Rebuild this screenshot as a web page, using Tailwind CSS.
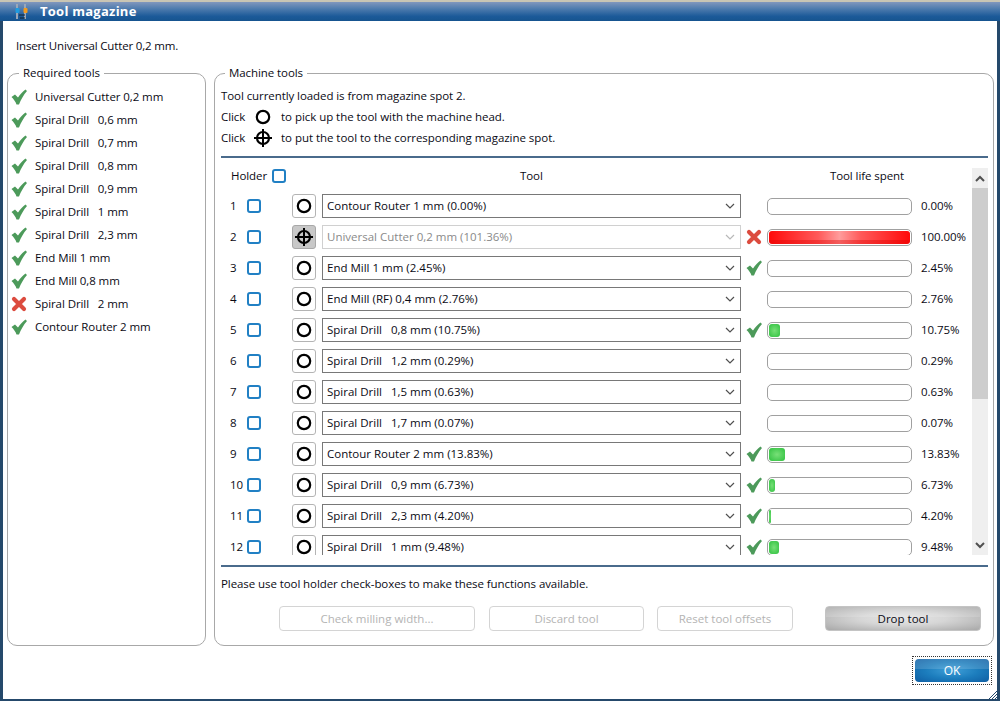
<!DOCTYPE html>
<html lang="en">
  <head>
    <meta charset="utf-8">
    <title>Tool magazine</title>
    <script src="https://cdn.jsdelivr.net/npm/@tailwindcss/browser@4"></script>
  </head>
  <body class="overflow-hidden bg-white">
    <div class="flex h-[701px] w-[1000px] flex-col font-['Open_Sans','Noto_Sans',sans-serif] text-[11.5px] tracking-[-0.08px] text-[#0a0a14]">

      <!-- title bar -->
      <div class="h-[2px] bg-[#c9c5b4]"></div>
      <div class="flex h-[19px] items-center bg-[linear-gradient(to_bottom,#8197bd_0%,#4f7cae_35%,#1c5a99_75%,#16548f_100%)] pl-[14px]">
        <svg width="16" height="16" viewBox="0 0 16 16">
          <path d="M3 0v15M11 0v15" stroke="#9aa7b8" stroke-width="2"/>
          <rect x="1.500" y="4" width="4" height="5" rx="1" fill="#1e9be0"/>
          <rect x="9.500" y="4" width="4" height="5" rx="1" fill="#f29a1e"/>
          <path d="M5 11h6M6 14h5" stroke="#10202e" stroke-width="1"/>
        </svg>
        <span class="ml-[10px] text-[13px] font-bold tracking-[0.25px] text-white">Tool magazine</span>
      </div>

      <div class="relative flex min-h-0 flex-1 flex-col border-x-[3px] border-b-[2px] border-[#25496b]">
        <p class="ml-[13px] mt-[16px] h-[18px] leading-[18px] tracking-[-0.16px]">Insert Universal Cutter 0,2 mm.</p>

        <div class="ml-[4px] mt-[10px] flex h-[581px] gap-[8px]">
          <!-- required tools -->
          <fieldset class="h-[581px] w-[199px] shrink-0 rounded-[10px] border border-[#a8a8a8]">
            <legend class="ml-[11px] px-[4px] leading-[16px]">Required tools</legend>
            <ul id="required" class="mt-[4px]"></ul>
          </fieldset>

          <!-- machine tools -->
          <fieldset class="h-[581px] w-[780px] shrink-0 rounded-[10px] border border-[#a8a8a8] pl-[6px] pr-[5px]">
            <legend class="ml-[4px] px-[4px] leading-[16px]">Machine tools</legend>
            <div class="h-[73px] border-b-2 border-[#4a6b8c]">
              <p class="mt-[4px] h-[21px] leading-[21px]">Tool currently loaded is from magazine spot 2.</p>
              <div class="flex h-[21px] items-center">
                <span class="w-[34px]">Click</span>
                <svg width="16" height="16" viewBox="0 0 16 16"><circle cx="8" cy="8" r="6.200" fill="none" stroke="#000" stroke-width="2.200"/></svg>
                <span class="ml-[10px] tracking-[-0.04px]">to pick up the tool with the machine head.</span>
              </div>
              <div class="flex h-[21px] items-center">
                <span class="w-[34px]">Click</span>
                <svg width="18" height="18" viewBox="0 0 18 18" class="-ml-[1px]"><circle cx="9" cy="9" r="6" fill="none" stroke="#000" stroke-width="2.200"/><path d="M9 0v18M0 9h18" stroke="#000" stroke-width="2"/></svg>
                <span class="ml-[9px] tracking-[-0.04px]">to put the tool to the corresponding magazine spot.</span>
              </div>
            </div>

            <!-- tool list -->
            <div class="flex h-[409px] border-b-2 border-[#4a6b8c] pt-[10px]">
              <div class="h-[387px] w-[751px] shrink-0 overflow-hidden">
                <div class="flex h-[16px] items-center">
                  <span class="ml-[10px] w-[41px]">Holder</span>
                  <span class="h-[14px] w-[14px] rounded-[3px] border-2 border-[#2180c4]"></span>
                  <span class="ml-[234px] w-[20px] text-center">Tool</span>
                  <span class="ml-[282px] w-[90px] text-center">Tool life spent</span>
                </div>
                <div id="rows" class="mt-[10px] flex flex-col gap-[7px]"></div>
              </div>
              <!-- scrollbar -->
              <div class="flex h-[387px] w-[16px] shrink-0 flex-col bg-[#efefef]">
                <div class="flex h-[20px] items-center justify-center">
                  <svg width="10" height="7" viewBox="0 0 10 7"><path d="M1 6l4-4 4 4" fill="none" stroke="#505050" stroke-width="2"/></svg>
                </div>
                <div class="h-[211px] bg-[#cdcdcd]"></div>
                <div class="flex-1"></div>
                <div class="flex h-[20px] items-center justify-center">
                  <svg width="10" height="7" viewBox="0 0 10 7"><path d="M1 1l4 4 4-4" fill="none" stroke="#505050" stroke-width="2"/></svg>
                </div>
              </div>
            </div>

            <p class="mt-[8px] h-[18px] leading-[18px]">Please use tool holder check-boxes to make these functions available.</p>

            <div class="mt-[13px] flex h-[25px] tracking-normal">
              <button class="ml-[58px] w-[196px] rounded-[4px] border border-[#d4d4d4] text-[#b4b4b4]">Check milling width...</button>
              <button class="ml-[14px] w-[155px] rounded-[4px] border border-[#d4d4d4] text-[#b4b4b4]">Discard tool</button>
              <button class="ml-[13px] w-[136px] rounded-[4px] border border-[#d4d4d4] text-[#b4b4b4]">Reset tool offsets</button>
              <button class="relative ml-[32px] w-[156px] overflow-hidden rounded-[4px] border border-[#c4c4c4] bg-[radial-gradient(ellipse_at_center,#e6e6e6_0%,#d6d6d6_40%,#a8a8a8_100%)]">
                <span class="absolute inset-x-0 top-0 h-[10px] bg-white/15"></span>
                <span class="relative">Drop tool</span>
              </button>
            </div>
          </fieldset>
        </div>

        <!-- dialog buttons -->
        <div class="mt-[10px] flex justify-end pr-[5px]">
          <div class="h-[29px] w-[80px] border border-dotted border-[#333] p-[2px]">
            <button class="relative h-full w-full overflow-hidden rounded-[4px] bg-[radial-gradient(ellipse_at_center,#3f9fd8_0%,#1c7dbd_50%,#0f5ea3_100%)] text-white">
              <span class="absolute inset-x-0 top-0 h-[10px] bg-white/15"></span>
              <span class="relative text-[12px]">OK</span>
            </button>
          </div>
        </div>

        <!-- resize grip -->
        <svg width="9" height="9" viewBox="0 0 9 9" class="absolute bottom-0 right-0"><path d="M9 1L1 9M9 4L4 9M9 7L7 9" stroke="#25496b" stroke-width="1"/></svg>
      </div>
    </div>

    <script>
      const check = `<svg width="16" height="16" viewBox="0 0 16 16" class="shrink-0"><path d="M0.500 8L4 5.500L7 8.500C9 5.500 11.500 2.500 14.500 0.500L16 2C12.500 6 10 10.500 8 15.500H5.500C4.500 12.500 2.500 10 0.500 8z" fill="#4c9a5a"/></svg>`;
      const cross = `<svg width="16" height="16" viewBox="0 0 16 16" class="shrink-0"><path d="M3 3l10 10M13 3L3 13" stroke="#dc4b3e" stroke-width="4.200" stroke-linecap="round"/></svg>`;
      const circle = `<svg width="16" height="16" viewBox="0 0 16 16"><circle cx="8" cy="8" r="6.200" fill="none" stroke="#000" stroke-width="2.200"/></svg>`;
      const target = `<svg width="18" height="18" viewBox="0 0 18 18"><circle cx="9" cy="9" r="6" fill="none" stroke="#000" stroke-width="2.200"/><path d="M9 0v18M0 9h18" stroke="#000" stroke-width="2"/></svg>`;

      const required = [
        ['Universal Cutter 0,2 mm', true],
        ['Spiral Drill   0,6 mm', true],
        ['Spiral Drill   0,7 mm', true],
        ['Spiral Drill   0,8 mm', true],
        ['Spiral Drill   0,9 mm', true],
        ['Spiral Drill   1 mm', true],
        ['Spiral Drill   2,3 mm', true],
        ['End Mill 1 mm', true],
        ['End Mill 0,8 mm', true],
        ['Spiral Drill   2 mm', false],
        ['Contour Router 2 mm', true],
      ];

      document.getElementById('required').innerHTML = required.map(([name, ok]) => `
        <li class="flex h-[23px] items-center pl-[3px]">
          ${ok ? check : cross}
          <span class="ml-[8px] whitespace-pre">${name}</span>
        </li>`).join('');

      const rows = [
        ['Contour Router 1 mm (0.00%)', 0, ''],
        ['Universal Cutter 0,2 mm (101.36%)', 100, 'bad'],
        ['End Mill 1 mm (2.45%)', 2.45, 'ok'],
        ['End Mill (RF) 0,4 mm (2.76%)', 2.76, ''],
        ['Spiral Drill   0,8 mm (10.75%)', 10.75, 'ok'],
        ['Spiral Drill   1,2 mm (0.29%)', 0.29, ''],
        ['Spiral Drill   1,5 mm (0.63%)', 0.63, ''],
        ['Spiral Drill   1,7 mm (0.07%)', 0.07, ''],
        ['Contour Router 2 mm (13.83%)', 13.83, 'ok'],
        ['Spiral Drill   0,9 mm (6.73%)', 6.73, 'ok'],
        ['Spiral Drill   2,3 mm (4.20%)', 4.2, 'ok'],
        ['Spiral Drill   1 mm (9.48%)', 9.48, 'ok'],
      ];

      const bar = (pct) => {
        if (pct >= 100) return `<div class="h-full w-full rounded-[3px] bg-[linear-gradient(to_bottom,#00000000_0%,#00000000_68%,#e0000066_68%),linear-gradient(to_right,#ff0a0a_0%,#ff5a5a_35%,#ff9c9c_50%,#ff5a5a_65%,#ff0a0a_100%)]"></div>`;
        if (pct < 3) return '';
        return `<div class="h-full rounded-[3px] bg-[radial-gradient(ellipse_at_center,#78e078_0%,#2fc03f_100%)]" style="width:${pct * 1.43 - 4}px"></div>`;
      };

      document.getElementById('rows').innerHTML = rows.map(([name, pct, state], i) => {
        const active = i === 1;
        return `
        <div class="flex h-[24px] shrink-0 items-center leading-[14px]">
          <span class="ml-[9px] w-[17px]">${i + 1}</span>
          <span class="h-[14px] w-[14px] shrink-0 rounded-[3px] border-2 border-[#2180c4]"></span>
          <div class="ml-[31px] flex h-[24px] w-[24px] shrink-0 items-center justify-center rounded-[3px] border ${active ? 'border-[#a8a8a8] bg-[#c8c8c8]' : 'border-[#b4b4b4] bg-white'}">${active ? target : circle}</div>
          <div class="ml-[6px] flex h-[24px] w-[419px] shrink-0 items-center justify-between border pl-[4px] pr-[5px] tracking-normal ${active ? 'border-[#d0d0d0] text-[#8a8a8a]' : 'border-[#787878]'}">
            <span class="whitespace-pre">${name}</span>
            <svg width="10" height="6" viewBox="0 0 10 6"><path d="M1 1l4 4 4-4" fill="none" stroke="${active ? '#b8b8b8' : '#505050'}" stroke-width="1.200"/></svg>
          </div>
          <div class="ml-[5px] flex w-[16px] shrink-0 justify-center">${state === 'ok' ? check : state === 'bad' ? cross : ''}</div>
          <div class="ml-[5px] h-[17px] w-[145px] shrink-0 rounded-[5px] border border-[#a0a0a0] bg-white p-[1px]">${bar(pct)}</div>
          <span class="ml-[9px]">${pct === 100 ? '100.00' : pct.toFixed(2)}%</span>
        </div>`;
      }).join('');
    </script>
  </body>
</html>
